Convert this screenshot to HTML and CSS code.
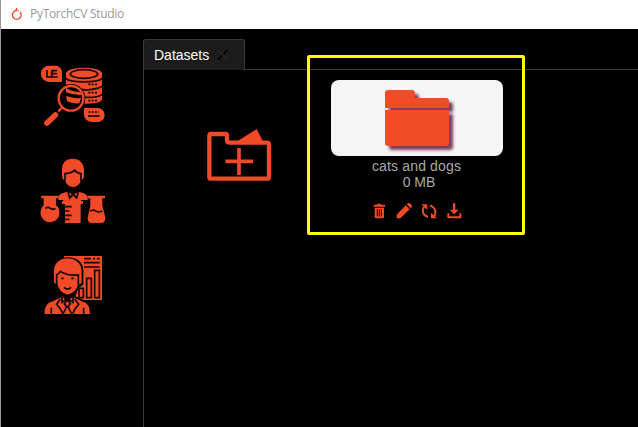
FILE: index.html
```html
<!DOCTYPE html>
<html lang="en">
<head>
<meta charset="utf-8">
<title>PyTorchCV Studio</title>
<link rel="stylesheet" href="styles.css">
</head>
<body>
<div class="window">
  <header class="titlebar">
    <svg class="logo" viewBox="0 0 36 42"><path d="M17 8 L8 15 A13 13 0 1 0 27 15" fill="none" stroke="#ee4c2c" stroke-width="4.500"/><path d="M17 3V13" stroke="#ee4c2c" stroke-width="4"/><circle cx="23" cy="11" r="2" fill="#ee4c2c"/></svg>
    <span class="app-name">PyTorchCV Studio</span>
  </header>
  <div class="body">
    <nav class="sidebar">
      <svg class="nav-icon" viewBox="0 0 225 216">
        <g class="fill">
          <path d="M42 17H62A20 20 0 0 1 81 37V66H42A24 24 0 0 1 42 17Z"/>
          <path d="M93 41C93 17 201 17 201 41V117C201 126 180 132 150 131L93 125Z"/>
          <path d="M147 144H188A20 20 0 0 1 188 186H170A23 23 0 0 1 147 165Z"/>
        </g>
        <g class="cut">
          <path d="M36 30V51H68M50 32V50M50 32H66M50 41H66"/>
          <ellipse cx="147" cy="42" rx="41" ry="13"/>
          <path d="M93 55C105 69 189 69 201 55M120 86C150 93 184 89 202 79M142 111C170 114 190 111 202 103"/>
          <path stroke-dasharray="6 4" d="M160 73H190M160 98H190M160 122H190M160 156H192"/>
          <path d="M159 168H194"/>
        </g>
        <circle cx="108" cy="115" r="43" fill="#000"/>
        <path class="fill" d="M93 84Q113 96 136 96L140 105Q115 106 93 97Z"/>
        <path class="fill" d="M93 108Q114 116 138 114L133 130Q111 132 96 124Z"/>
        <circle class="line" cx="108" cy="115" r="37"/>
        <path class="line handle" d="M36 189L61 165"/>
        <path class="line" d="M70 154L80 144"/>
      </svg>
      <svg class="nav-icon tall" viewBox="0 0 225 228">
        <g class="fill">
          <path d="M81 70V52Q82 20 114 20Q145 20 147 52V70Q147 84 138 84Q133 103 114 106Q94 102 90 84Q81 84 81 70Z"/>
          <path d="M70 144V134Q72 124 98 119L114 129L130 119Q156 124 158 134V144H138V147H85V144Z"/>
          <path d="M19 131H70V139H63V159A29 29 0 1 1 26 160V139H19Z"/>
          <path d="M158 131H210V139H202V161L211 196Q211 213 200 213H170Q157 212 158 197L166 161V139H158Z"/>
          <path d="M81 147H144V156H137V213H90V156H81Z"/>
        </g>
        <g class="cut">
          <path d="M90 86V65Q108 64 119 55Q125 64 138 65V86"/>
          <path d="M99 120L104 138L114 127L125 138L130 120M105 116L124 137M124 116L104 137"/>
          <path d="M31 169Q39 163 46 169Q54 175 61 169M166 178Q174 170 184 178Q193 183 202 176"/>
          <path d="M90 164H110M90 177H103M90 190H110M90 202H103M77 146V155M76 160V203M150 155V205"/>
        </g>
      </svg>
      <svg class="nav-icon" viewBox="0 0 225 216">
        <path class="fill" d="M87 24H201V156H87Z"/>
        <g class="cut">
          <path d="M147 32H168M174 32H180M186 32H194M147 44H194M147 57H194"/>
          <path d="M132 121H145V149H132ZM155 91H169V149H155ZM179 67H193V149H179Z"/>
        </g>
        <path d="M52 108V66C52 15 145 15 145 66V110L131 119L121 145L164 164V202H26V166L77 146L68 112Z" fill="#000"/>
        <g class="fill">
          <path d="M57 99V68C57 18 138 18 140 68V100Q140 109 130 109Q122 136 98 140Q74 136 67 109Q57 108 57 99Z"/>
          <path d="M28 198Q29 164 50 161L82 146L97 160L113 146L143 161Q165 165 165 198Z"/>
        </g>
        <g class="cut">
          <path d="M65 110V80Q72 77 76 70Q98 84 130 81V110"/>
          <path d="M79 91H86M109 91H116M87 118Q98 129 108 118"/>
          <path d="M81 145V163L97 151L114 163V145M76 153L65 169L77 184L84 198M119 153L131 169L119 184L113 198M97 155L88 167L95 176L84 198M97 155L106 167L99 176L110 198M49 179V198M146 179V198"/>
        </g>
      </svg>
    </nav>
    <main class="content">
      <div class="tabs">
        <div class="tab"><span>Datasets</span><svg class="close" viewBox="0 0 36 36"><path d="M4 31L30 5" stroke="#030303" stroke-width="5"/><path d="M6 7L30 31" stroke="#292929" stroke-width="4"/></svg></div>
        <div class="tab-line"></div>
      </div>
      <div class="panel">
        <svg class="add" viewBox="0 0 240 210">
          <path d="M108 66L170 27L190 66Z" fill="#f04a29"/>
          <path d="M28 42H76Q81 42 81 48V59Q81 68 90 68H201Q207 68 207 74V170Q207 176 201 176H34Q28 176 28 170V48Q28 42 34 42Z" fill="none" stroke="#f04a29" stroke-width="13"/>
          <path d="M117 84V165M76 124H159" stroke="#f04a29" stroke-width="11"/>
        </svg>
        <section class="dataset">
          <div class="thumb">
            <svg class="folder" viewBox="0 0 64 57"><path d="M0 18V3Q0 0 3 0H27Q30 0 30 3V8H61Q64 8 64 11V18ZM0 20H64V53Q64 56 61 56H3Q0 56 0 53Z" fill="#f14b28"/></svg>
          </div>
          <div class="name">cats and dogs</div>
          <div class="size">0 MB</div>
          <svg class="actions" viewBox="0 0 282 54">
            <g class="fill">
              <path d="M12 5H24V8H36V14H2V8H12ZM5 17H33V45Q33 49 29 49H9Q5 49 5 45Z"/>
              <path d="M71 49V38L98 10L110 22L82 49ZM101 7L105 4Q109 2 112 5L116 9Q119 12 116 15L113 19Z"/>
              <path d="M145 7H163V24ZM192 49H174V32Z"/>
              <path d="M240 4H247V23H257L243.500 37L230 23H240ZM223 34H229V43H259V34H265V49H223Z"/>
            </g>
            <path d="M153 14Q142 36 165 45M184 42Q195 20 171 10" fill="none" stroke="#f04a29" stroke-width="6"/>
            <path d="M13 22V43M19 22V43M25 22V43" stroke="#000" stroke-width="3"/>
          </svg>
        </section>
      </div>
    </main>
  </div>
</div>
</body>
</html>
```
FILE: styles.css
```css
* { box-sizing: border-box; }
body { margin: 0; background: #000; overflow: hidden; }
svg { display: block; flex: none; }
.window { width: 638px; height: 427px; border-left: 1px solid #999; display: flex; flex-direction: column; background: #000; }
.titlebar { height: 29px; flex: none; background: #fff; display: flex; align-items: center; padding: 0 0 1px 10px; }
.logo { width: 12px; height: 14px; }
.app-name { margin-left: 7px; font: 12px/16px "Open Sans", sans-serif; letter-spacing: -0.3px; color: #999; white-space: nowrap; }
.body { flex: 1; display: flex; min-height: 0; }
.sidebar { width: 142px; flex: none; padding: 31px 0 0 34px; display: flex; flex-direction: column; gap: 20px; }
.nav-icon { width: 75px; height: 72px; }
.nav-icon.tall { height: 76px; }
.fill { fill: #f04a29; }
.line { fill: none; stroke: #f04a29; stroke-width: 7; }
.line.handle { stroke-width: 17; stroke-linecap: round; }
.cut { fill: none; stroke: #160402; stroke-width: 5; }
.content { flex: 1; padding-top: 10px; display: flex; flex-direction: column; font-family: "Liberation Sans", sans-serif; }
.tabs { display: flex; height: 31px; flex: none; }
.tab { width: 102px; border: 1px solid #3a3a3a; border-bottom: 0; border-radius: 3px 3px 0 0; background: #1c1c1c; color: #fff; font-size: 14px; line-height: 16px; padding: 7px 0 0 10px; display: flex; }
.close { width: 12px; height: 12px; margin: 2px 0 0 8px; }
.tab-line { flex: 1; border-bottom: 1px solid #3a3a3a; }
.panel { flex: 1; border-left: 1px solid #3a3a3a; display: flex; align-items: flex-start; }
.add { width: 80px; height: 70px; margin: 50px 0 0 56px; }
.dataset { width: 218px; height: 180px; margin: -15px 0 0 27px; border: 3px solid #ff0; border-radius: 2px; padding-top: 22px; display: flex; flex-direction: column; align-items: center; font-size: 14px; line-height: 16px; color: #a9a9a9; }
.thumb { width: 172px; height: 76px; margin-left: 1px; flex: none; border-radius: 8px; background: #f5f5f5; padding: 10px 0 0 54px; }
.folder { width: 64px; height: 57px; overflow: visible; filter: drop-shadow(4px 4px 1.5px rgba(91, 16, 54, 0.8)); }
.name { margin: 2px 0 0 1px; letter-spacing: 0.15px; }
.size { margin-left: 6px; }
.actions { width: 94px; height: 18px; margin: 12px 0 0 7px; }
```
